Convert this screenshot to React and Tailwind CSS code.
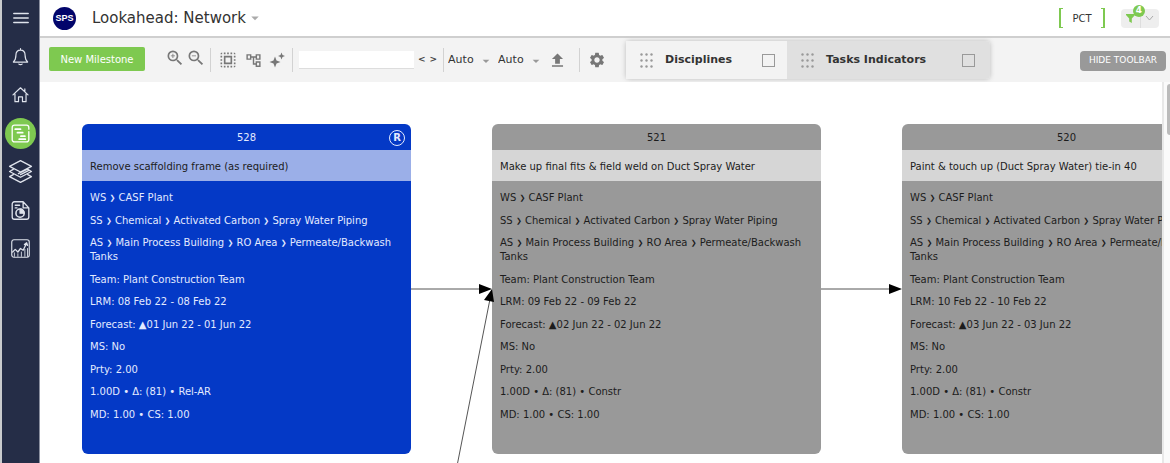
import { Fragment, useState } from "react";
import {
  MdZoomIn,
  MdZoomOut,
  MdSelectAll,
  MdOutlineAccountTree,
  MdFileUpload,
  MdSettings,
  MdArrowDropDown,
} from "react-icons/md";

const tasks = [
  {
    id: 528,
    title: "Remove scaffolding frame (as required)",
    lrm: "08 Feb 22 - 08 Feb 22",
    forecast: "01 Jun 22 - 01 Jun 22",
    type: "Rel-AR",
    ready: true,
    position: "left-[42px]",
  },
  {
    id: 521,
    title: "Make up final fits & field weld on Duct Spray Water",
    lrm: "09 Feb 22 - 09 Feb 22",
    forecast: "02 Jun 22 - 02 Jun 22",
    type: "Constr",
    position: "left-[452px]",
  },
  {
    id: 520,
    title: "Paint & touch up (Duct Spray Water) tie-in 40",
    lrm: "10 Feb 22 - 10 Feb 22",
    forecast: "03 Jun 22 - 03 Jun 22",
    type: "Constr",
    position: "left-[862px]",
  },
];

function Icon({ size = 18, children }) {
  return (
    <svg
      width={size}
      height={size}
      viewBox="0 0 24 24"
      fill="none"
      stroke="currentColor"
      strokeWidth="1.5"
      strokeLinecap="round"
      strokeLinejoin="round"
      aria-hidden="true"
    >
      {children}
    </svg>
  );
}

const navItems = [
  {
    label: "Menu",
    icon: (
      <Icon size={18}>
        <path d="M2.5 6h19M2.5 12h19M2.5 18h19" strokeWidth="2.2" />
      </Icon>
    ),
  },
  {
    label: "Notifications",
    icon: (
      <Icon size={19}>
        <path d="M12 2v2M12 4c-4 0-5.8 3-5.8 6.5 0 4.5-1 6.5-3.2 8.5h18c-2.2-2-3.2-4-3.2-8.5C17.8 7 16 4 12 4zM10 21.500c.8 1 3.200 1 4 0" />
      </Icon>
    ),
  },
  {
    label: "Home",
    icon: (
      <Icon size={19}>
        <path d="M2.5 12.5 12 3.5l9.5 9M5 11v10h4.5v-6h5v6H19V11M17.5 8V5" />
      </Icon>
    ),
  },
  {
    label: "Lookahead",
    active: true,
    icon: (
      <Icon size={21}>
        <path d="M21.5 7V5A2.5 2.5 0 0 0 19 2.5H5A2.5 2.5 0 0 0 2.5 5v14A2.5 2.5 0 0 0 5 21.5h14a2.5 2.5 0 0 0 2.5-2.5v-9" />
        <path d="M6 7h6M8.5 11h6M12.5 15H17M10.5 18.5h7" strokeWidth="2" />
      </Icon>
    ),
  },
  {
    label: "Layers",
    icon: (
      <Icon size={25}>
        <path
          d="M12 1.5 1.5 7 12 12.5 22.5 7zM5 10l-3.5 2L12 17.5 22.5 12 19 10M5 15l-3.5 2L12 22.5 22.5 17 19 15M10 14l9-4.5M12 15l8-4"
          strokeWidth="1.3"
        />
      </Icon>
    ),
  },
  {
    label: "Reports",
    icon: (
      <Icon size={21}>
        <path d="M15 2H5a2.5 2.5 0 0 0-2.5 2.5v15A2.5 2.5 0 0 0 5 22h14a2.5 2.5 0 0 0 2.5-2.5V9zM15 2v7h6.500M6 6h5M6 9h2" />
        <circle cx="11.5" cy="15" r="4.7" strokeWidth="1.8" />
        <path d="M11.5 15v-4.5A4.5 4.5 0 0 1 16 15z" fill="currentColor" />
      </Icon>
    ),
  },
  {
    label: "Analytics",
    icon: (
      <Icon size={21}>
        <rect x="2" y="2" width="20" height="20" rx="2.5" strokeWidth="1.3" />
        <path d="m3 16 3-3 3 3 3-4 3 2 4-8M16.5 7.5 19 5.5l1 3" />
        <path d="M5 17v4M9 18v3M13 16v5M17 13v8M20 12v9" strokeWidth="1" />
      </Icon>
    ),
  },
];

function Sidebar() {
  return (
    <nav className="w-10 shrink-0 border-r border-l-2 border-r-[#8b90a0] border-l-[#c9cbcd] bg-[#252d47] text-[#dfe3ec]">
      <ul className="flex h-[264px] flex-col items-center justify-between pt-[2px]">
        {navItems.map((item) => (
          <li key={item.label}>
            <button
              aria-label={item.label}
              className={`flex size-[31px] items-center justify-center rounded-full ${
                item.active ? "bg-[#7ec950] text-white" : ""
              }`}
            >
              {item.icon}
            </button>
          </li>
        ))}
      </ul>
    </nav>
  );
}

function Header() {
  return (
    <header className="flex h-[38px] shrink-0 items-center border-b-2 border-[#cfcfcf] pr-[11px] pl-[13px]">
      <span className="flex size-[23px] items-center justify-center rounded-full bg-[#02056b] pt-px font-['Liberation_Sans',sans-serif] text-[9px] font-bold text-white">
        SPS
      </span>
      <h1 className="ml-4 pt-px text-[15px] text-[#333]">Lookahead: Network</h1>
      <button aria-label="Change view" className="text-[#aaa]">
        <MdArrowDropDown size={18} />
      </button>
      <div className="ml-auto flex h-5 w-[46px] items-center justify-between text-[#7ec950]">
        <span className="h-5 w-1 border-y border-l-2 border-current" />
        <button className="pt-px text-[10px] text-[#333]">PCT</button>
        <span className="h-5 w-1 border-y border-r-2 border-current" />
      </div>
      <div className="relative ml-4 flex h-[19px] w-[38px] items-center rounded-sm bg-[#eee]">
        <button
          aria-label="Filter"
          className="flex flex-1 justify-center text-[#7ec950]"
        >
          <svg width="9" height="9" viewBox="0 0 9 9" fill="currentColor">
            <path d="M0 0h9v1L5.800 4.500V9L3.200 7.500v-3L0 1z" />
          </svg>
        </button>
        <button
          aria-label="Filter options"
          className="flex h-full flex-1 items-center justify-center border-l border-[#ddd] text-[#aaa]"
        >
          <svg width="9" height="6" viewBox="0 0 9 6" fill="none" stroke="currentColor">
            <path d="m1 1 3.5 4L8 1" />
          </svg>
        </button>
        <span className="absolute -top-1 left-3 flex size-3 items-center justify-center rounded-full bg-[#7ec950] text-[9px] font-bold text-white">
          4
        </span>
      </div>
    </header>
  );
}

function Separator() {
  return <span className="h-6 w-px shrink-0 bg-[#d2d2d2]" />;
}

function AutoSelect({ label }) {
  return (
    <div className="relative flex w-[50px] shrink-0 items-center">
      <select
        aria-label={label}
        className="w-full appearance-none bg-transparent text-[11px] text-[#333] outline-none"
      >
        <option>Auto</option>
      </select>
      <MdArrowDropDown
        size={16}
        className="pointer-events-none absolute right-1 text-[#999]"
      />
    </div>
  );
}

function DragDots() {
  return (
    <svg width="13" height="15" viewBox="0 0 13 15" fill="#999" aria-hidden="true">
      {[1.5, 7.5, 13.5].map((y) =>
        [1.5, 6.5, 11.5].map((x) => (
          <circle key={`${x}-${y}`} cx={x} cy={y} r="1.2" />
        ))
      )}
    </svg>
  );
}

function FilterPanel({ name, className }) {
  return (
    <label className={`flex items-center pl-[14px] ${className}`}>
      <DragDots />
      <span className="ml-3 pt-px text-[11px] font-bold text-[#333]">{name}</span>
      <input
        type="checkbox"
        className="ml-auto size-[13px] appearance-none border border-[#999] checked:bg-[#7ec950]"
      />
    </label>
  );
}

function Toolbar() {
  const [search, setSearch] = useState("");

  return (
    <div className="flex h-11 shrink-0 items-center bg-[#f3f3f3] pr-1 pl-[9px] text-[#777]">
      <button className="mb-[2px] h-6 w-24 shrink-0 rounded-xs bg-[#7ec950] text-[10px] text-white">
        New Milestone
      </button>
      <div className="mb-1 ml-5 flex shrink-0 gap-px">
        <button aria-label="Zoom in">
          <MdZoomIn size={20} />
        </button>
        <button aria-label="Zoom out">
          <MdZoomOut size={20} />
        </button>
      </div>
      <div className="ml-1 flex shrink-0 items-center gap-[7px]">
        <Separator />
        <button aria-label="Select all">
          <MdSelectAll size={20} />
        </button>
        <button aria-label="Show hierarchy">
          <MdOutlineAccountTree size={17} />
        </button>
        <button aria-label="Auto arrange">
          <svg width="16" height="16" viewBox="0 0 16 16" fill="currentColor">
            <path d="M6 4.500 7.500 8.500 11.500 10 7.500 11.500 6 15.500 4.500 11.500.5 10l4-1.500zM12.500.5l1 2.500 2.500 1-2.500 1-1 2.500-1-2.500L9 4l2.500-1z" />
          </svg>
        </button>
        <Separator />
      </div>
      <input
        aria-label="Search"
        value={search}
        onChange={(e) => setSearch(e.target.value)}
        className="ml-[6px] h-[18px] w-[115px] border-b border-[#ddd] bg-white px-1 text-[10px] outline-none"
      />
      <div className="ml-1 flex shrink-0 gap-1 text-[9px] font-bold text-[#444]">
        <button aria-label="Previous result">&lt;</button>
        <button aria-label="Next result">&gt;</button>
      </div>
      <div className="ml-[6px] flex shrink-0 items-center">
        <Separator />
        <div className="ml-1 flex pt-px">
          <AutoSelect label="Layout" />
          <AutoSelect label="Spacing" />
        </div>
        <button aria-label="Upload">
          <MdFileUpload size={19} />
        </button>
      </div>
      <div className="ml-3 flex shrink-0 items-center gap-2">
        <Separator />
        <button aria-label="Settings">
          <MdSettings size={18} />
        </button>
      </div>
      <div className="ml-5 flex h-[38px] shrink-0 rounded-sm shadow-[0_0_5px_#bbb]">
        <FilterPanel name="Disciplines" className="w-[161px] bg-[#f3f3f3] pr-3" />
        <FilterPanel
          name="Tasks Indicators"
          className="w-[203px] rounded-r-sm bg-[#e0e0e0] pr-[15px]"
        />
      </div>
      <button className="mt-[2px] ml-auto h-5 w-[86px] shrink-0 rounded bg-[#999] text-[9px] text-white">
        HIDE TOOLBAR
      </button>
    </div>
  );
}

function Breadcrumb({ items }) {
  return (
    <p>
      {items.map((item, i) => (
        <Fragment key={item}>
          {i > 0 && (
            <>
              {" "}
              <span className="align-[1px] text-[7px] leading-none font-bold">❯</span>{" "}
            </>
          )}
          {item}
        </Fragment>
      ))}
    </p>
  );
}

function TaskCard({ task }) {
  return (
    <article
      className={`absolute top-[42px] flex h-[330px] w-[329px] flex-col overflow-hidden rounded-md text-[10px] leading-[14px] ${
        task.position
      } ${task.ready ? "bg-[#0439c6] text-[#e3eaff]" : "bg-[#999] text-[#1c1c1c]"}`}
    >
      <div className="relative flex h-[26px] shrink-0 items-center justify-center pt-[2px]">
        {task.id}
        {task.ready && (
          <span className="absolute right-[6px] flex size-4 items-center justify-center rounded-full border border-current text-[10px] font-bold">
            R
          </span>
        )}
      </div>
      <h2
        className={`flex h-[31px] shrink-0 items-center px-2 pt-[2px] text-[#1c1c1c] ${
          task.ready ? "bg-[#9bafe8]" : "bg-[#d6d6d6]"
        }`}
      >
        {task.title}
      </h2>
      <div className="flex flex-1 flex-col justify-between px-2 pt-[10px] pb-8">
        <Breadcrumb items={["WS", "CASF Plant"]} />
        <Breadcrumb
          items={["SS", "Chemical", "Activated Carbon", "Spray Water Piping"]}
        />
        <Breadcrumb
          items={["AS", "Main Process Building", "RO Area", "Permeate/Backwash Tanks"]}
        />
        <p>Team: Plant Construction Team</p>
        <p>LRM: {task.lrm}</p>
        <p>Forecast: ▲{task.forecast}</p>
        <p>MS: No</p>
        <p>Prty: 2.00</p>
        <p>1.00D • Δ: (81) • {task.type}</p>
        <p>MD: 1.00 • CS: 1.00</p>
      </div>
    </article>
  );
}

function NetworkCanvas() {
  return (
    <main className="relative min-w-0 flex-1 overflow-hidden bg-white">
      {tasks.map((task) => (
        <TaskCard key={task.id} task={task} />
      ))}
      <svg className="pointer-events-none absolute inset-0 size-full">
        <g stroke="#555" strokeWidth="1">
          <path d="M371 207h70M781 207h70M417 384l33-167" />
        </g>
        <g fill="#000">
          <path d="m452 207-13-5v10zM862 207l-13-5v10zM452 207l-8 11 10 2z" />
        </g>
      </svg>
    </main>
  );
}

export default function App() {
  return (
    <div className="flex h-screen overflow-hidden bg-white font-['DejaVu_Sans',sans-serif]">
      <Sidebar />
      <div className="flex min-w-0 flex-1 flex-col">
        <Header />
        <Toolbar />
        <div className="flex min-h-0 flex-1">
          <NetworkCanvas />
          <div className="w-2 shrink-0 border-l-2 border-[#e8e8e8] bg-[#fafafa] pt-[2px]">
            <div className="ml-auto h-[51px] w-[3px] rounded-l-sm bg-[#bbb]" />
          </div>
        </div>
      </div>
    </div>
  );
}
